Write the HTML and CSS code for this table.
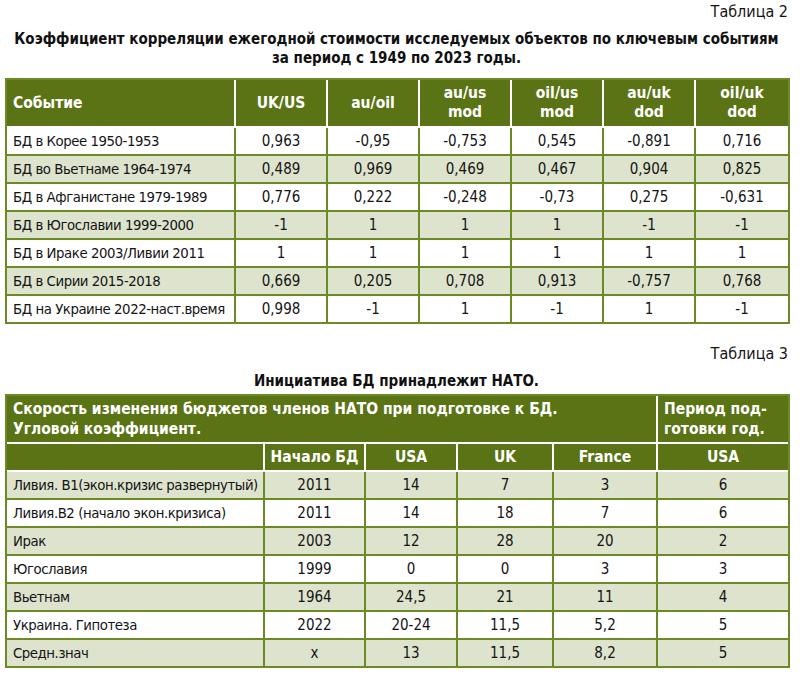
FILE: index.html
```html
<!DOCTYPE html>
<html lang="ru">
<head>
<meta charset="utf-8">
<title>Таблицы</title>
<link rel="stylesheet" href="styles.css">
</head>
<body>
<div class="page">
  <div class="table-no">Таблица 2</div>
  <div class="title">Коэффициент корреляции ежегодной стоимости исследуемых объектов по ключевым событиям<br>за период с 1949 по 2023 годы.</div>
  <table class="grid t1">
    <colgroup>
      <col class="c1-first"><col class="c1"><col class="c1"><col class="c1"><col class="c1"><col class="c1"><col class="c1">
    </colgroup>
    <thead>
      <tr>
        <th class="left">Событие</th>
        <th>UK/US</th>
        <th>au/oil</th>
        <th>au/us<br>mod</th>
        <th>oil/us<br>mod</th>
        <th>au/uk<br>dod</th>
        <th>oil/uk<br>dod</th>
      </tr>
    </thead>
    <tbody>
      <tr><td class="left">БД в Корее 1950-1953</td><td>0,963</td><td>-0,95</td><td>-0,753</td><td>0,545</td><td>-0,891</td><td>0,716</td></tr>
      <tr class="shade"><td class="left">БД во Вьетнаме 1964-1974</td><td>0,489</td><td>0,969</td><td>0,469</td><td>0,467</td><td>0,904</td><td>0,825</td></tr>
      <tr><td class="left">БД в Афганистане 1979-1989</td><td>0,776</td><td>0,222</td><td>-0,248</td><td>-0,73</td><td>0,275</td><td>-0,631</td></tr>
      <tr class="shade"><td class="left">БД в Югославии 1999-2000</td><td>-1</td><td>1</td><td>1</td><td>1</td><td>-1</td><td>-1</td></tr>
      <tr><td class="left">БД в Ираке 2003/Ливии 2011</td><td>1</td><td>1</td><td>1</td><td>1</td><td>1</td><td>1</td></tr>
      <tr class="shade"><td class="left">БД в Сирии 2015-2018</td><td>0,669</td><td>0,205</td><td>0,708</td><td>0,913</td><td>-0,757</td><td>0,768</td></tr>
      <tr><td class="left">БД на Украине 2022-наст.время</td><td>0,998</td><td>-1</td><td>1</td><td>-1</td><td>1</td><td>-1</td></tr>
    </tbody>
  </table>

  <div class="table-no second">Таблица 3</div>
  <div class="title title2">Инициатива БД принадлежит НАТО.</div>
  <table class="grid t2">
    <colgroup>
      <col class="c2-a"><col class="c2-b"><col class="c2-c"><col class="c2-d"><col class="c2-e"><col class="c2-f">
    </colgroup>
    <thead>
      <tr class="head-tall">
        <th class="left" colspan="5">Скорость изменения бюджетов членов НАТО при подготовке к БД.<br>Угловой коэффициент.</th>
        <th class="left narrow">Период под-<br>готовки год.</th>
      </tr>
      <tr class="head-short">
        <th></th>
        <th>Начало БД</th>
        <th>USA</th>
        <th>UK</th>
        <th>France</th>
        <th>USA</th>
      </tr>
    </thead>
    <tbody>
      <tr class="shade"><td class="left">Ливия. В1(экон.кризис развернутый)</td><td>2011</td><td>14</td><td>7</td><td>3</td><td>6</td></tr>
      <tr><td class="left">Ливия.В2 (начало экон.кризиса)</td><td>2011</td><td>14</td><td>18</td><td>7</td><td>6</td></tr>
      <tr class="shade"><td class="left">Ирак</td><td>2003</td><td>12</td><td>28</td><td>20</td><td>2</td></tr>
      <tr><td class="left">Югославия</td><td>1999</td><td>0</td><td>0</td><td>3</td><td>3</td></tr>
      <tr class="shade"><td class="left">Вьетнам</td><td>1964</td><td>24,5</td><td>21</td><td>11</td><td>4</td></tr>
      <tr><td class="left">Украина. Гипотеза</td><td>2022</td><td>20-24</td><td>11,5</td><td>5,2</td><td>5</td></tr>
      <tr class="shade"><td class="left">Средн.знач</td><td>х</td><td>13</td><td>11,5</td><td>8,2</td><td>5</td></tr>
    </tbody>
  </table>
</div>
</body>
</html>
```

FILE: styles.css
```css
html, body {
  margin: 0;
  padding: 0;
  background: #ffffff;
}

body {
  font-family: "DejaVu Sans Condensed", "DejaVu Sans", sans-serif;
  font-stretch: condensed;
  color: #141414;
}

.page {
  width: 783px;
  margin-left: 5px;
  padding-top: 2px;
}

.table-no {
  text-align: right;
  font-size: 16px;
  line-height: 20px;
  color: #141414;
}

.table-no.second {
  margin-top: 20px;
}

.title {
  margin-top: 8px;
  text-align: center;
  font-weight: 700;
  font-size: 15px;
  line-height: 19px;
  color: #111111;
}

.title2 {
  margin-top: 8px;
  margin-bottom: 3px;
}

.t1 {
  margin-top: 10px;
}

.grid {
  width: 783px;
  border-collapse: separate;
  border-spacing: 0;
  border: 2px solid #6b8a23;
  table-layout: fixed;
}

.c1-first { width: 229px; }
.c1 { width: 92px; }

.c2-a { width: 258px; }
.c2-b { width: 101px; }
.c2-c { width: 92px; }
.c2-d { width: 96px; }
.c2-e { width: 104px; }
.c2-f { width: 130px; }

.grid th {
  background: #5a7315;
  color: #ffffff;
  font-weight: 700;
  font-size: 15.5px;
  line-height: 19px;
  text-align: center;
  vertical-align: middle;
  padding: 4px 4px;
  border-right: 2px solid #ffffff;
  border-bottom: 2px solid #ffffff;
}

.grid th:last-child {
  border-right: none;
}

.grid th.left {
  text-align: left;
  padding-left: 6px;
}

.grid th.narrow {
  padding-left: 6px;
}

.t2 .head-tall th {
  line-height: 20px;
  padding-top: 3px;
  padding-bottom: 3px;
}

.t2 .head-short th {
  line-height: 20px;
  padding-top: 3px;
  padding-bottom: 3px;
}

.grid td {
  font-size: 15px;
  line-height: 20px;
  padding: 3px 4px;
  text-align: center;
  color: #141414;
  background: #ffffff;
  border-right: 2px solid #6b8a23;
  border-bottom: 2px solid #6b8a23;
  white-space: nowrap;
}

.grid td:last-child {
  border-right: none;
}

.grid tbody tr:last-child td {
  border-bottom: none;
}

.grid tr.shade td {
  background: #dde3cd;
}

.grid td.left {
  text-align: left;
  padding-left: 6px;
  font-size: 14.8px;
  letter-spacing: -0.45px;
}
```
